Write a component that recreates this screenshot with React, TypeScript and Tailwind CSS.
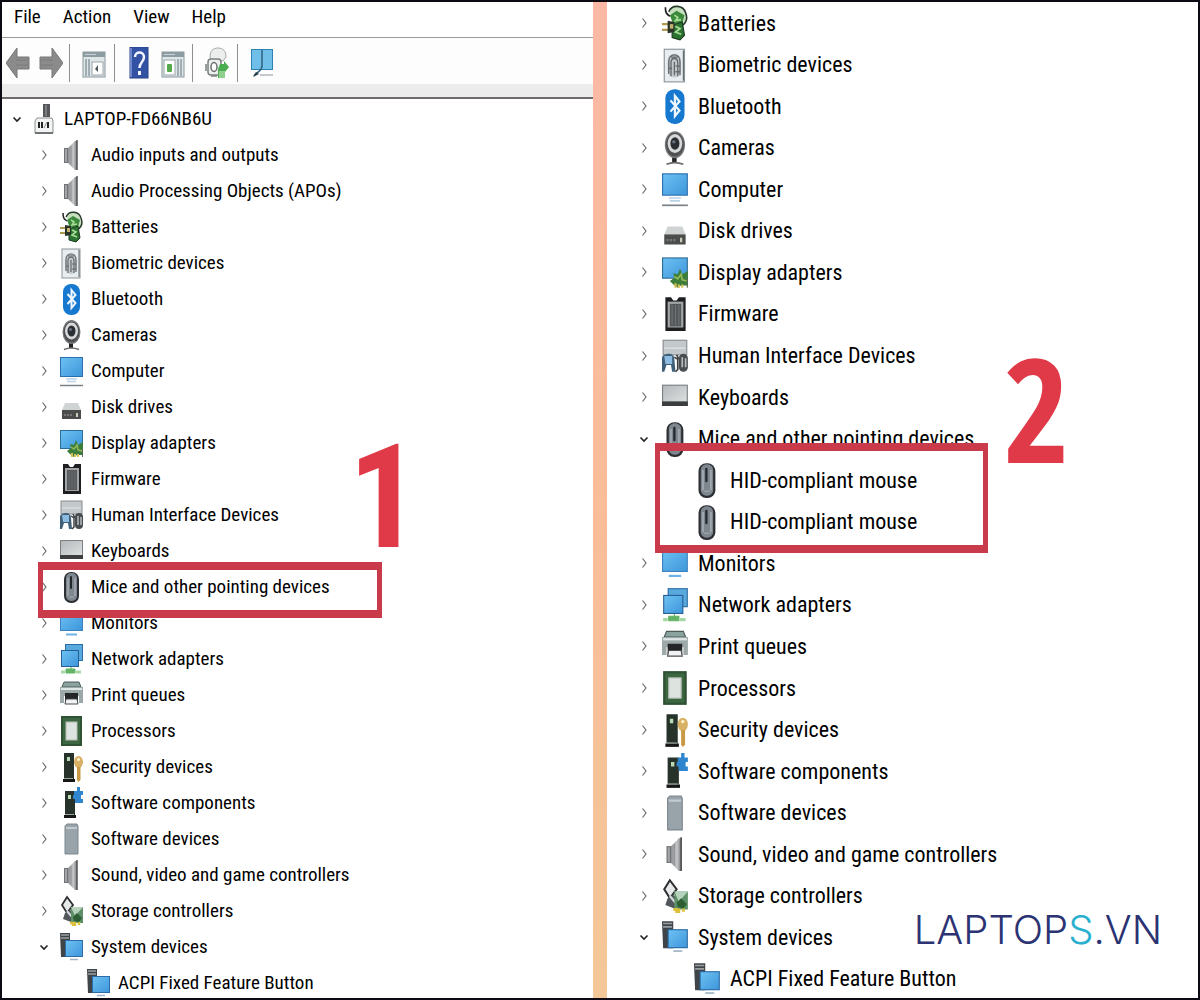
import clsx from "clsx";
import type { ReactNode } from "react";

type IconName =
  | "root"
  | "audio"
  | "battery"
  | "biometric"
  | "bluetooth"
  | "camera"
  | "computer"
  | "disk"
  | "display"
  | "firmware"
  | "hid"
  | "keyboard"
  | "mouse"
  | "monitor"
  | "network"
  | "printer"
  | "processor"
  | "security"
  | "component"
  | "software"
  | "storage"
  | "system";

interface TreeNode {
  label: string;
  icon: IconName;
  level: 0 | 1 | 2;
  state: "open" | "closed" | "leaf";
  mark?: "one" | "two";
}

function item(label: string, icon: IconName): TreeNode {
  return { label, icon, level: 1, state: "closed" };
}

const LEFT_TREE: TreeNode[] = [
  { label: "LAPTOP-FD66NB6U", icon: "root", level: 0, state: "open" },
  item("Audio inputs and outputs", "audio"),
  item("Audio Processing Objects (APOs)", "audio"),
  item("Batteries", "battery"),
  item("Biometric devices", "biometric"),
  item("Bluetooth", "bluetooth"),
  item("Cameras", "camera"),
  item("Computer", "computer"),
  item("Disk drives", "disk"),
  item("Display adapters", "display"),
  item("Firmware", "firmware"),
  item("Human Interface Devices", "hid"),
  item("Keyboards", "keyboard"),
  { ...item("Mice and other pointing devices", "mouse"), mark: "one" },
  item("Monitors", "monitor"),
  item("Network adapters", "network"),
  item("Print queues", "printer"),
  item("Processors", "processor"),
  item("Security devices", "security"),
  item("Software components", "component"),
  item("Software devices", "software"),
  item("Sound, video and game controllers", "audio"),
  item("Storage controllers", "storage"),
  { ...item("System devices", "system"), state: "open" },
  { label: "ACPI Fixed Feature Button", icon: "system", level: 2, state: "leaf" },
];

const RIGHT_TREE: TreeNode[] = [
  item("Batteries", "battery"),
  item("Biometric devices", "biometric"),
  item("Bluetooth", "bluetooth"),
  item("Cameras", "camera"),
  item("Computer", "computer"),
  item("Disk drives", "disk"),
  item("Display adapters", "display"),
  item("Firmware", "firmware"),
  item("Human Interface Devices", "hid"),
  item("Keyboards", "keyboard"),
  { ...item("Mice and other pointing devices", "mouse"), state: "open" },
  { label: "HID-compliant mouse", icon: "mouse", level: 2, state: "leaf", mark: "two" },
  { label: "HID-compliant mouse", icon: "mouse", level: 2, state: "leaf" },
  item("Monitors", "monitor"),
  item("Network adapters", "network"),
  item("Print queues", "printer"),
  item("Processors", "processor"),
  item("Security devices", "security"),
  item("Software components", "component"),
  item("Software devices", "software"),
  item("Sound, video and game controllers", "audio"),
  item("Storage controllers", "storage"),
  { ...item("System devices", "system"), state: "open" },
  { label: "ACPI Fixed Feature Button", icon: "system", level: 2, state: "leaf" },
];

// All device icons are drawn on the same 24x32 grid
const ICONS: Record<IconName, ReactNode> = {
  root: (
    <>
      <rect x="10" y="1" width="7" height="13" fill="#55575a" />
      <rect x="12" y="2" width="2" height="11" fill="#7b7d80" />
      <path d="M4 15h15l1 3v12H2V18z" fill="#f3f4f4" stroke="#8b8e90" />
      <path d="M2 30h18" stroke="#707375" strokeWidth="2" />
      <path d="M6 19v6M9 19v6M15 19v6" stroke="#222" strokeWidth="2" />
      <path d="M11 25l3-6" stroke="#888" />
    </>
  ),
  audio: (
    <>
      <rect x="4" y="9" width="5" height="15" fill="#6f7174" />
      <rect x="5" y="10" width="2" height="13" fill="#a3a5a8" />
      <path d="M8 9L15 2h2v29h-2L8 24z" fill="url(#metal)" />
      <path d="M11 7v19" stroke="#909295" />
      <path d="M17 1v30" stroke="#525456" strokeWidth="1.5" />
    </>
  ),
  battery: (
    <>
      <path d="M3 2c0 5 1 6 4 8" fill="none" stroke="#222" strokeWidth="1.5" />
      <path d="M6 6c3-7 13-6 15 1 2 5 1 9-4 12" fill="#c5dfbf" stroke="#26382a" strokeWidth="1.4" />
      <path d="M7 9l6-4 7 4-2 7-8 1z" fill="#3b8a3b" />
      <path d="M9 18l9-3 2 12-4 4-7-2z" fill="#2c7331" stroke="#1c3a20" />
      <path d="M11 9l3 2-2 3 5-1M12 19l4 2-4 3 5 2" fill="none" stroke="#a6dc96" strokeWidth="1.6" />
      <path d="M0 17h6M0 22h6" stroke="#b09a50" strokeWidth="2" />
      <path d="M5 14l6 1v9l-6 1z" fill="#2a3328" />
      <path d="M7 17h3v4H7z" fill="#c3b571" />
    </>
  ),
  biometric: (
    <>
      <rect x="2" y="2" width="18" height="29" fill="#e7edf0" stroke="#8c9498" />
      <path d="M19 3v27" stroke="#5d666a" />
      <rect x="5" y="6" width="12" height="21" rx="6" fill="#c4c9cc" />
      <path
        d="M6 24V13c0-8 10-8 10 0v12M8 26V14c0-5 6-5 6 0v12M11 13v12M6 19h3M12 17h4M12 22h4M8 9h6"
        fill="none"
        stroke="#64696d"
        strokeWidth="1.2"
      />
    </>
  ),
  bluetooth: (
    <>
      <rect x="3" y="1" width="17" height="31" rx="8" fill="#1679cf" />
      <path d="M7.5 11l8 9-4 5V7l4 5-8 9" fill="none" stroke="#eef7ff" strokeWidth="2" />
    </>
  ),
  camera: (
    <>
      <path d="M11 24v5" stroke="#222" strokeWidth="4" />
      <path d="M4 30.5q7-3 15 0" fill="none" stroke="#6a6c6e" strokeWidth="1.5" />
      <ellipse cx="11.5" cy="13" rx="9" ry="12" fill="#77797b" />
      <ellipse cx="11.5" cy="13" rx="8" ry="10.5" fill="#4e5052" />
      <ellipse cx="11.5" cy="12" rx="6.5" ry="8.5" fill="#d7d9da" />
      <ellipse cx="11.5" cy="12" rx="4" ry="5.5" fill="#2b2e33" />
      <circle cx="10.5" cy="10.5" r="1.5" fill="#6b7482" />
    </>
  ),
  computer: (
    <>
      <rect x="0" y="2" width="23" height="20" fill="#2b6fae" />
      <rect x="1" y="3" width="21" height="18" fill="url(#screen)" />
      <path d="M6 24h11M7 26.5h9" stroke="#bcd3e6" strokeWidth="1.5" />
      <path d="M0 30.5h23" stroke="#7a8085" strokeWidth="1.5" />
    </>
  ),
  disk: (
    <>
      <path d="M5 12h13l3 7H2z" fill="#d0d3d3" />
      <rect x="2" y="19" width="19" height="9" fill="#4b4d4d" />
      <path d="M4 24h8" stroke="#777" strokeWidth="2" strokeDasharray="2 1" />
      <rect x="16" y="22" width="2" height="4" fill="#c9cbb8" />
    </>
  ),
  display: (
    <>
      <rect x="0" y="3" width="23" height="19" fill="#2a6d96" />
      <rect x="1" y="4" width="21" height="17" fill="url(#screen)" />
      <path d="M7 24l4-3-1-4 4 1 2-5 2 5 5-3v13h-6l-3 2-3-2z" fill="#3c7d3b" />
      <path d="M11 20l3 2 3-4 1 5 4 1" fill="none" stroke="#92b957" strokeWidth="1.5" />
      <path d="M12 26v4M15 27v3M18 27v3" stroke="#d6c25a" strokeWidth="2" />
      <path d="M22.5 22v8" stroke="#5a6a55" />
    </>
  ),
  firmware: (
    <>
      <path d="M3 1h5l2 3h3l2-3h6v30H3z" fill="#1d1f20" />
      <rect x="5" y="5" width="14" height="23" fill="#a3a5a6" />
      <rect x="7" y="7" width="10" height="20" fill="#55585a" />
      <path d="M9 8v18M12 8v18M15 8v18" stroke="#6f7274" />
    </>
  ),
  hid: (
    <>
      <rect x="1" y="2" width="21" height="13" fill="#c3c8cb" stroke="#878c90" />
      <path d="M2 9h19" stroke="#e4e7e9" />
      <path d="M0 30V18c0-3 4-4 6-4s5 1 5 5l1 11H9l-1-6H4l-2 6z" fill="#3f5f78" />
      <path d="M2 16h7v7H3z" fill="#8dbce0" />
      <path d="M11 17l3 2v9l-2 2M13 15l2 4" stroke="#3d3f41" strokeWidth="1.5" fill="none" />
      <rect x="15" y="14" width="8" height="16" rx="4" fill="#4a4d50" />
      <path d="M18 17v9M21 18v8" stroke="#b8bcc0" strokeWidth="1.5" />
    </>
  ),
  keyboard: (
    <>
      <rect x="0" y="5" width="23" height="19" fill="#7d8082" />
      <rect x="1" y="6" width="21" height="14" fill="url(#silver)" />
      <rect x="0" y="20" width="23" height="4" fill="#3b3d3f" />
    </>
  ),
  mouse: (
    <>
      <rect x="4" y="1" width="15" height="31" rx="7" fill="#2b2e33" />
      <rect x="6" y="2" width="11" height="28" rx="5" fill="#7f878e" />
      <path d="M8 7v18M15 7v18" stroke="#a4abb2" strokeWidth="1.5" />
      <rect x="10" y="5" width="2" height="13" rx="1" fill="#22262d" />
      <path d="M9 26h5" stroke="#a4abb2" />
    </>
  ),
  monitor: (
    <>
      <rect x="0" y="4" width="23" height="20" fill="#3b82bf" />
      <rect x="1" y="5" width="21" height="18" fill="url(#screen)" />
      <path d="M6 27.5h11" stroke="#6db2e6" strokeWidth="2" />
    </>
  ),
  network: (
    <>
      <rect x="5" y="1" width="18" height="17" fill="#2c6ea3" />
      <rect x="6" y="2" width="16" height="15" fill="#58a9dd" />
      <rect x="1" y="7" width="18" height="17" fill="#255f95" />
      <rect x="2" y="8" width="16" height="15" fill="url(#screen)" />
      <path d="M11 24v3M6 26h9v4H6z" fill="#63b466" stroke="#63b466" />
      <path d="M1 29h4M16 29h5" stroke="#a5d8a4" strokeWidth="3" />
    </>
  ),
  printer: (
    <>
      <path d="M4 3h15l2 5H2z" fill="#8aa39f" stroke="#4c5a5a" />
      <path d="M0 8h23v16h-4v-7H4v7H0z" fill="#9da8a9" />
      <path d="M1 10h21" stroke="#dfe6e6" strokeWidth="2" />
      <path d="M5 14h13v10H5z" fill="#232527" />
      <path d="M6 20h11l1 5H5z" fill="#f2f3f3" stroke="#4b4e50" />
    </>
  ),
  processor: (
    <>
      <rect x="1" y="1" width="21" height="30" fill="#2f5134" />
      <rect x="3" y="3" width="17" height="26" fill="#3d6741" />
      <rect x="6" y="7" width="11" height="18" fill="#dde3de" stroke="#b5beb5" />
    </>
  ),
  security: (
    <>
      <path d="M4 2h10v26H4z" fill="#27332a" />
      <path d="M3 28h12v3H3z" fill="#161817" />
      <path d="M4 27.5h9" stroke="#9fa3a0" />
      <rect x="7" y="6" width="3" height="4" fill="#b9dbb4" />
      <ellipse cx="18.5" cy="11" rx="4.5" ry="6" fill="#d8b164" />
      <circle cx="18.5" cy="8.5" r="1.5" fill="#fff4d0" />
      <path d="M17 16h3.500v13l-2 2-1.500-2z" fill="#c99a45" />
    </>
  ),
  component: (
    <>
      <path d="M5 4h10v24H5z" fill="#27332a" />
      <path d="M4 28h12v3H4z" fill="#161817" />
      <path d="M5 27.5h9" stroke="#9fa3a0" />
      <rect x="8" y="8" width="3" height="4" fill="#b9dbb4" />
      <path d="M14 4h3V0h3v4h3v4h-2v4h2v4h-8v-4h-2V8h1z" fill="#2f86cf" />
    </>
  ),
  software: (
    <>
      <path d="M5 3l2-2h10l1 2v28H5z" fill="#98a3aa" stroke="#7c868d" />
      <path d="M6 5h11" stroke="#c3cbd0" strokeWidth="2" />
    </>
  ),
  storage: (
    <>
      <path d="M7 2l6 8-6 8-5-8z" fill="#e7eaea" stroke="#2c2e30" strokeWidth="1.8" />
      <path d="M5 18l5-3 6 5v6l-5 1-8-3z" fill="#50565a" />
      <path d="M7 16l5 6" stroke="#d6dadb" strokeWidth="2" />
      <path d="M11 12h12v16H11z" fill="#5d9068" />
      <path d="M11 12h12l-8 9z" fill="#b6d1bc" />
      <path d="M13 22l4-4 5 5-3 4-5-1z" fill="#2d5e34" />
      <path d="M10 28h3v3M15 27v4M19 27v3" fill="none" stroke="#dcc23c" strokeWidth="2.5" />
    </>
  ),
  system: (
    <>
      <path d="M0 2h10v24H1z" fill="#3f4449" />
      <path d="M1 4h8M1 7h8" stroke="#9a9fa4" strokeWidth="1.5" />
      <rect x="5" y="9" width="18" height="17" fill="#2b6ba6" />
      <rect x="6" y="10" width="16" height="15" fill="url(#screen)" />
      <path d="M10 28.5h8" stroke="#9fb4c4" strokeWidth="1.5" />
    </>
  ),
};

function IconGradients() {
  return (
    <svg className="absolute size-0" aria-hidden="true">
      <defs>
        <linearGradient id="screen" x1="0" y1="0" x2="1" y2="1">
          <stop offset="0" stopColor="#6cc0f2" />
          <stop offset="1" stopColor="#3f97db" />
        </linearGradient>
        <linearGradient id="metal" x1="0" y1="0" x2="1" y2="0">
          <stop offset="0" stopColor="#8d9093" />
          <stop offset="0.6" stopColor="#c5c7c9" />
          <stop offset="1" stopColor="#77797c" />
        </linearGradient>
        <linearGradient id="silver" x1="0" y1="0" x2="1" y2="1">
          <stop offset="0" stopColor="#b5b9bb" />
          <stop offset="1" stopColor="#dcdfe0" />
        </linearGradient>
      </defs>
    </svg>
  );
}

function Chevron({ open }: { open: boolean }) {
  return (
    <svg viewBox="0 0 10 14" className="w-2.5 h-3.5" fill="none" aria-hidden="true">
      {open ? (
        <path d="M1.5 5.5l3.500 3.500 3.500-3.500" stroke="#222" strokeWidth="1.6" />
      ) : (
        <path d="M3.5 2.5l3.500 4.500-3.500 4.500" stroke="#6b6b6b" strokeWidth="1.2" />
      )}
    </svg>
  );
}

const MARK_BOX = "absolute z-10 pointer-events-none border-[#c93a4b] border-x-[5px] border-y-8";
const MARK_DIGIT = "absolute z-10 pointer-events-none text-[144px] leading-none font-bold text-[#e03a48]";

function Mark({ kind }: { kind: "one" | "two" }) {
  if (kind === "one") {
    return (
      <>
        <div className={clsx(MARK_BOX, "left-9 -top-2.5 w-[344px] h-14")} />
        <span className={clsx(MARK_DIGIT, "left-[346px] bottom-8 font-['Roboto_Condensed','Roboto',sans-serif]")}>
          1
        </span>
      </>
    );
  }
  return (
    <>
      <div className={clsx(MARK_BOX, "left-12 -top-[18px] w-[333px] h-[110px]")} />
      <span className={clsx(MARK_DIGIT, "left-[396px] bottom-5 font-['Open_Sans_Condensed','Open_Sans',sans-serif]")}>
        2
      </span>
    </>
  );
}

function DeviceTree({ nodes, large = false }: { nodes: TreeNode[]; large?: boolean }) {
  return (
    <ul
      className={clsx(
        "flex flex-col text-black",
        large ? "flex-1 justify-between pt-0.5 text-[22px]" : "gap-1.5 pt-[5px] text-[19px]",
      )}
    >
      {nodes.map((node, idx) => (
        <li
          key={idx}
          className={clsx(
            "relative flex items-center whitespace-nowrap",
            large ? "h-[38px] gap-[9px]" : "h-[30px] gap-[7px]",
            !large && node.level === 0 && "pl-2.5",
            !large && node.level === 1 && "pl-[37px]",
            !large && node.level === 2 && "pl-[85px]",
            large && node.level === 1 && "pl-8",
            large && node.level === 2 && "pl-[87px]",
          )}
        >
          {node.state !== "leaf" && (
            <button
              type="button"
              aria-label={`${node.state === "open" ? "Collapse" : "Expand"} ${node.label}`}
              aria-expanded={node.state === "open"}
              className="mr-1"
            >
              <Chevron open={node.state === "open"} />
            </button>
          )}
          <svg viewBox="0 0 24 32" className={clsx("shrink-0", large ? "w-[27px] h-9" : "w-6 h-8")} aria-hidden="true">
            {ICONS[node.icon]}
          </svg>
          <span>{node.label}</span>
          {node.mark && <Mark kind={node.mark} />}
        </li>
      ))}
    </ul>
  );
}

function MenuBar() {
  return (
    <nav className="flex gap-[22px] h-9 pl-3 pb-1 items-center border-b border-[#9a9a9a] text-[19px]">
      {["File", "Action", "View", "Help"].map((label) => (
        <button key={label} type="button">
          {label}
        </button>
      ))}
    </nav>
  );
}

function ToolButton({ label, children }: { label: string; children: ReactNode }) {
  return (
    <button type="button" aria-label={label}>
      <svg viewBox="0 0 24 32" className="w-6 h-8">
        {children}
      </svg>
    </button>
  );
}

function Separator() {
  return <div className="w-px h-[38px] bg-[#8f8f8f]" />;
}

function Toolbar() {
  return (
    <div className="flex items-center h-[46px] pl-1 pt-1 bg-[#fdfdfd]">
      <div className="flex gap-[9px]">
        <ToolButton label="Back">
          <path d="M0 16L11 1v9h12v12H11v9z" fill="#8b8b8b" stroke="#777" />
          <path d="M10 13h12M10 18h12" stroke="#7a7a7a" />
        </ToolButton>
        <ToolButton label="Forward">
          <path d="M24 16L13 1v9H1v12h12v9z" fill="#8b8b8b" stroke="#777" />
          <path d="M2 13h12M2 18h12" stroke="#7a7a7a" />
        </ToolButton>
      </div>
      <div className="flex items-center pl-1.5 gap-3">
        <Separator />
        <ToolButton label="Show or hide console tree">
          <rect x="1" y="5" width="22" height="25" fill="#dfe6e8" stroke="#8a979c" />
          <rect x="1" y="5" width="22" height="5" fill="#8d9ca2" />
          <path d="M3 7.5h11" stroke="#c9d3d6" />
          <path d="M4 12v17M7 12v17" stroke="#8c9aa0" strokeWidth="1.5" />
          <rect x="10" y="15" width="11" height="13" fill="#fff" stroke="#9aa6aa" />
          <path d="M16 18v7l-3-3z" fill="#4c555a" />
        </ToolButton>
      </div>
      <div className="flex items-center pl-2 gap-3">
        <Separator />
        <ToolButton label="Help">
          <rect x="3" y="0" width="18" height="31" fill="#3452a4" stroke="#27408a" />
          <path d="M4 1v29" stroke="#6f86c8" strokeWidth="2" />
          <path d="M8 10c0-6 9-6 9 0 0 5-4.500 5-4.500 11" fill="none" stroke="#f2f5ff" strokeWidth="2.5" />
          <rect x="11" y="24" width="3" height="4" fill="#f2f5ff" />
        </ToolButton>
      </div>
      <div className="flex items-center pl-2.5 gap-[7px]">
        <ToolButton label="Properties">
          <rect x="1" y="5" width="22" height="25" fill="#dfe6e8" stroke="#8a979c" />
          <rect x="1" y="5" width="22" height="5" fill="#8d9ca2" />
          <path d="M3 7.5h11" stroke="#c9d3d6" />
          <path d="M17 12v17M20 12v17" stroke="#8c9aa0" strokeWidth="1.5" />
          <rect x="3" y="13" width="11" height="15" fill="#fff" stroke="#9aa6aa" />
          <rect x="6" y="17" width="5" height="8" rx="1" fill="#55a84c" />
        </ToolButton>
        <Separator />
      </div>
      <div className="flex items-center pl-3 gap-2">
        <ToolButton label="Scan for hardware changes">
          <path d="M5 10c0-6 3-9 8-9s8 3 8 9l-3 4H7z" fill="#eceeed" stroke="#a4a9a8" />
          <rect x="3" y="12" width="13" height="16" rx="3" fill="#eef0ef" stroke="#7b8180" strokeWidth="1.5" />
          <path d="M1 17v7M6 29h6" stroke="#7b8180" strokeWidth="1.5" />
          <ellipse cx="9" cy="20" rx="3" ry="4.5" fill="#fff" stroke="#6b706f" strokeWidth="1.5" />
          <path d="M15 17h4v-3l5 6-4 5v6h-7v-9z" fill="#4aae50" />
          <path d="M14 24h6v7h-6z" fill="#8fcf90" />
        </ToolButton>
        <Separator />
      </div>
      <div className="flex items-center pl-3">
        <ToolButton label="Devices and printers">
          <rect x="1" y="2" width="22" height="21" fill="#2c82b0" />
          <rect x="2" y="3" width="20" height="19" fill="#6fbfe8" />
          <path d="M12 3v16c0 5-4 5-8 10" fill="none" stroke="#31607c" strokeWidth="1.5" />
          <path d="M3 30l3-5 3 2z" fill="#2f3f4a" />
          <path d="M10 28h13" stroke="#c3c9cc" strokeWidth="2" />
        </ToolButton>
      </div>
    </div>
  );
}

export default function App() {
  return (
    <div className="flex min-h-screen border-2 border-[#0d0a14] bg-white overflow-hidden font-['Roboto_Condensed','Roboto',sans-serif]">
      <IconGradients />
      <section className="flex-[591] min-w-0">
        <MenuBar />
        <Toolbar />
        <div className="h-[15px] bg-[#ececec] border-b-2 border-[#6e6a6e]" />
        <DeviceTree nodes={LEFT_TREE} />
      </section>
      <div className="w-3.5 bg-linear-to-b from-[#fbb9a5] via-[#f9bd99] to-[#f3c798]" />
      <section className="relative flex flex-col flex-[591] min-w-0">
        <DeviceTree nodes={RIGHT_TREE} large />
        <div className="absolute right-9 bottom-12 text-[40px] leading-none font-light text-[#2c3373] font-['Inter',sans-serif]">
          LAPTOP<span className="text-[#2ab0cf]">S</span>.VN
        </div>
      </section>
    </div>
  );
}
